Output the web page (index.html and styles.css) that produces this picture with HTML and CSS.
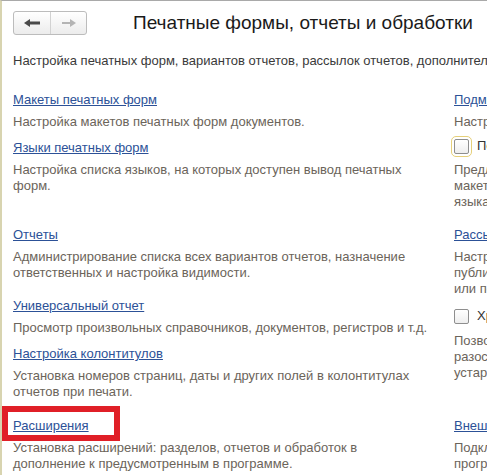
FILE: index.html
```html
<!DOCTYPE html>
<html lang="ru">
<head>
    <meta charset="UTF-8">
    <title>Печатные формы, отчеты и обработки</title>
    <link rel="stylesheet" href="styles.css">
</head>
<body>
<div class="page">
    <div class="head">
        <div class="nav">
            <span class="nav-btn nav-back">
                <svg width="16" height="8" viewBox="0 0 16 8"><polygon points="0,4 6,0 6,2.5 16,2.5 16,5.5 6,5.5 6,8" fill="#4a4a4a"/></svg>
            </span>
            <span class="nav-btn nav-fwd">
                <svg width="14" height="8" viewBox="0 0 14 8"><polygon points="14,4 8,0 8,3 0,3 0,5 8,5 8,8" fill="#b4b4b4"/></svg>
            </span>
        </div>
        <h1 class="title">Печатные формы, отчеты и обработки</h1>
    </div>
    <p class="lead">Настройка печатных форм, вариантов отчетов, рассылок отчетов, дополнительных отчетов и обработок.</p>

    <div class="panel">
        <!-- ряд 1 -->
        <div class="group">
            <div class="item">
                <a class="link" href="#">Макеты печатных форм</a>
                <p class="note">Настройка макетов печатных форм документов.</p>
            </div>
            <div class="item">
                <a class="link" href="#">Языки печатных форм</a>
                <p class="note">Настройка списка языков, на которых доступен вывод печатных форм.</p>
            </div>
        </div>
        <div class="group side">
            <div class="item">
                <a class="link" href="#">Подменю "Печать"</a>
                <p class="note">Настройка состава команд печати.</p>
                <div class="check-row">
                    <span class="box focus"></span>
                    <span class="label">Переводить макеты автоматически</span>
                </div>
                <p class="note after-check">Предлагать перевод текста печатных форм при выводе<br>макетов, для которых нет перевода на выбранный<br>языках печати.</p>
            </div>
        </div>

        <!-- ряд 2 -->
        <div class="group">
            <div class="item">
                <a class="link" href="#">Отчеты</a>
                <p class="note">Администрирование списка всех вариантов отчетов, назначение ответственных и настройка видимости.</p>
            </div>
            <div class="item wide">
                <a class="link" href="#">Универсальный отчет</a>
                <p class="note">Просмотр произвольных справочников, документов, регистров и т.д.</p>
            </div>
            <div class="item">
                <a class="link" href="#">Настройка колонтитулов</a>
                <p class="note">Установка номеров страниц, даты и других полей в колонтитулах отчетов при печати.</p>
            </div>
        </div>
        <div class="group side">
            <div class="item">
                <a class="link" href="#">Рассылки отчетов</a>
                <p class="note">Настройка автоматической отправки отчетов по почте,<br>публикации в сетевых каталогах, на FTP-ресурсах<br>или по расписанию.</p>
                <div class="check-row spaced">
                    <span class="box"></span>
                    <span class="label">Хранить историю рассылок</span>
                </div>
                <p class="note">Позволяет просматривать ранее<br>разосланные отчеты и удалять<br>устаревшие записи.</p>
            </div>
        </div>

        <!-- ряд 3 -->
        <div class="group last">
            <div class="item marked">
                <a class="link" href="#">Расширения</a>
                <span class="mark"></span>
                <p class="note">Установка расширений: разделов, отчетов и обработок в дополнение к предусмотренным в программе.</p>
            </div>
        </div>
        <div class="group side last">
            <div class="item">
                <a class="link" href="#">Внешние отчеты и обработки</a>
                <p class="note">Подключение дополнительных отчетов и обработок к<br>программе.</p>
            </div>
        </div>
    </div>
</div>
</body>
</html>
```

FILE: styles.css
```css
html,body{
    margin:0;
    overflow:hidden;
}
body{
    font-family: Arial, "Liberation Sans", sans-serif;
    font-size:13px;
    line-height:16px;
    color:#333;
    background:#fff;
}
.page{
    height:475px;
    box-sizing:border-box;
    border-top:1px solid #a9a9a9;
    border-left:2px solid #d8d4b0;
    padding:10px 0 0 11px;
}

/* шапка */
.head{
    display:flex;
    align-items:center;
    height:24px;
}
.nav{
    display:flex;
    flex:none;
    width:74px;
    height:24px;
    box-sizing:border-box;
    border:1px solid #bcbcbc;
    border-radius:3px;
    background:linear-gradient(#fff,#ececec);
}
.nav-btn{
    display:flex;
    align-items:center;
    justify-content:center;
}
.nav-back{
    width:36px;
    border-right:1px solid #d2d2d2;
}
.nav-fwd{
    flex:1;
}
.title{
    margin:0 0 0 46px;
    font-size:19px;
    line-height:24px;
    font-weight:normal;
    color:#1a1a1a;
    white-space:nowrap;
}
.lead{
    margin:18px 0 0;
    color:#3a3a3a;
    white-space:nowrap;
}

/* разделы */
.panel{
    display:grid;
    grid-template-columns:417px 1fr;
    column-gap:24px;
    row-gap:17px;
    margin-top:23px;
}
.side{
    white-space:nowrap;
}
.group.last{
    padding-top:1px;
}
.item + .item{
    margin-top:10px;
}
.item.wide{
    margin-top:17px;
}
.marked{
    position:relative;
}
.link{
    color:#2c5197;
    text-decoration:underline;
}
.note{
    margin:6px 0 0;
    color:#6b645a;
}
.check-row{
    display:flex;
    align-items:center;
    gap:8px;
    height:22px;
    margin-top:5px;
}
.check-row.spaced{
    margin-top:8px;
}
.label{
    color:#333;
}
.box{
    flex:none;
    width:15px;
    height:15px;
    box-sizing:border-box;
    border:1px solid #8e8e8e;
    border-radius:2px;
    background:linear-gradient(#fff,#eee);
}
.box.focus{
    outline:1px solid #e6d07a;
    outline-offset:2px;
}
.note.after-check{
    margin-top:5px;
}

/* выделение */
.mark{
    position:absolute;
    left:-11px;
    top:-12px;
    width:118px;
    height:35px;
    box-sizing:border-box;
    border:6px solid #e01f27;
}
```
